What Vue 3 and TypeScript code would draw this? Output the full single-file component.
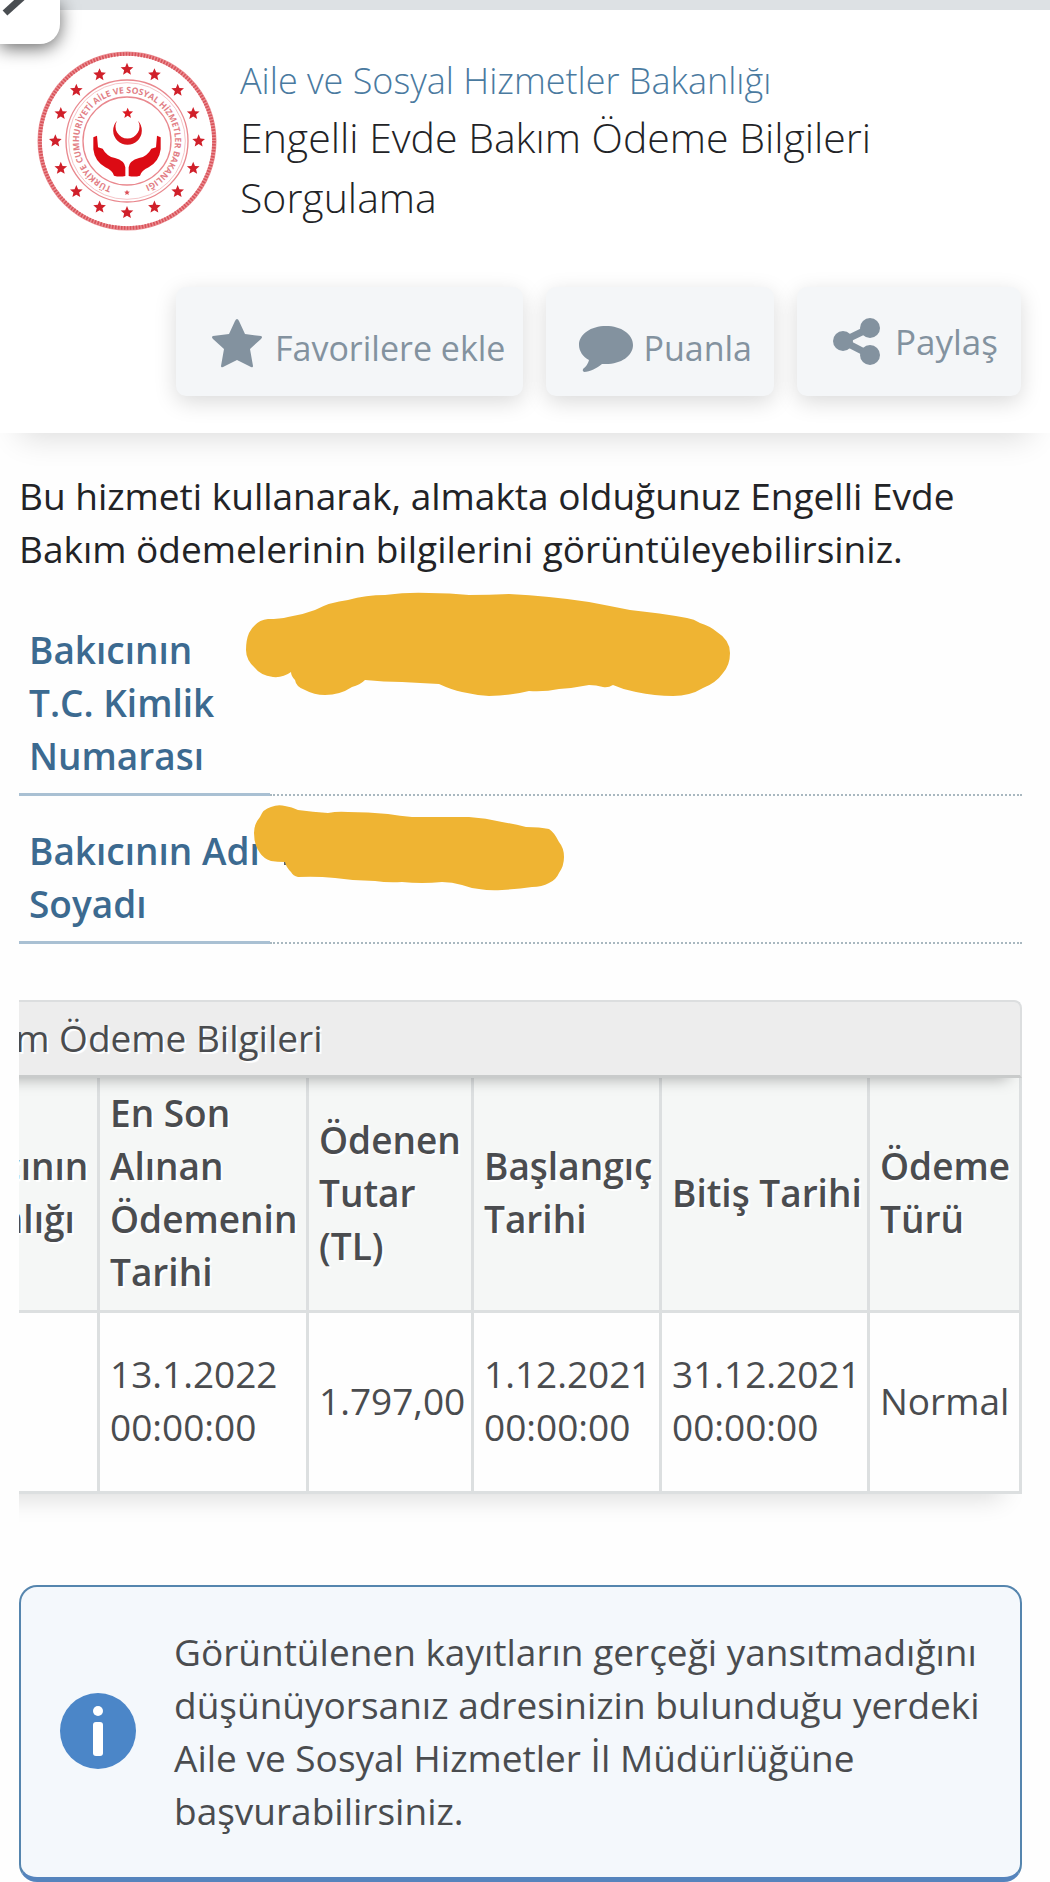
<script setup lang="ts">
interface Field {
  label: string
  redaction: string
  viewBox: string
  kind: string
}

interface Payment {
  relation: string
  lastPayment: string[]
  amount: string
  start: string[]
  end: string[]
  type: string
}

const fields: Field[] = [
  {
    label: 'Bakıcının T.C.\u00a0Kimlik Numarası',
    kind: 'id',
    viewBox: '240 585 500 120',
    redaction:
      'M246 650Q246 640 249 633Q256 620 268 619Q280 619 288 617Q302 615 315 610Q330 602 348 600Q366 595 385 595Q408 592 429 593Q450 593 469 595Q490 595 509 594Q530 595 549 597Q570 599 589 602Q610 606 630 610Q660 613 687 618Q694 619 700 623Q710 626 717 632Q730 640 730 653Q730 665 723 673Q716 683 703 688Q690 696 673 696Q655 696 636 692Q624 690 613 685Q608 688 603 687Q596 685 589 685Q574 688 559 689Q545 692 529 691Q509 696 489 696Q475 695 462 692Q452 690 439 684Q420 683 402 682Q384 682 365 680Q360 685 352 687Q340 695 325 695Q314 695 305 690Q296 687 295 680Q291 676 291 672Q283 678 273 677Q260 675 255 668Q246 660 246 650Z',
  },
  {
    label: 'Bakıcının Adı Soyadı',
    kind: 'name',
    viewBox: '250 800 320 95',
    redaction:
      'M254 833Q254 824 260 817Q263 809 271 807Q278 804 285 806Q292 807 298 810Q313 812 328 813Q338 811 348 812Q368 812 388 814Q400 816 412 817Q440 817 469 817Q486 818 502 822Q514 824 526 827Q540 827 549 829Q554 832 559 842Q564 848 564 857Q564 866 559 873Q556 880 549 883Q542 887 532 887Q518 889 502 890Q490 891 479 889Q470 888 462 885Q452 882 442 882Q422 884 402 882Q388 883 375 881Q355 881 335 878Q316 876 298 877Q293 876 291 872Q286 867 285 862Q277 862 271 861Q263 858 260 853Q254 845 254 833Z',
  },
]

const payments: Payment[] = [
  {
    relation: '',
    lastPayment: ['13.1.2022', '00:00:00'],
    amount: '1.797,00',
    start: ['1.12.2021', '00:00:00'],
    end: ['31.12.2021', '00:00:00'],
    type: 'Normal',
  },
]

function star(cx: number, cy: number, r: number): string {
  return Array.from({ length: 10 }, (_, i) => {
    const radius = i % 2 ? r * 0.45 : r
    const a = (i * Math.PI) / 5 - Math.PI / 2
    return `${(cx + radius * Math.cos(a)).toFixed(1)},${(cy + radius * Math.sin(a)).toFixed(1)}`
  }).join(' ')
}

const ringStars = Array.from({ length: 16 }, (_, i) => {
  const a = (i * Math.PI) / 8
  return star(381 + 215 * Math.sin(a), 423 - 215 * Math.cos(a), 20)
})
</script>

<template>
  <div class="page">
    <button class="corner" type="button" aria-label="Menü">
      <svg viewBox="0 0 60 44" width="60" height="44" aria-hidden="true">
        <path d="M5 13L26-6" stroke="#4a4e52" stroke-width="7" />
      </svg>
    </button>

    <header class="service">
      <div class="heading">
        <svg class="logo" viewBox="108 150 546 546" role="img" aria-label="Bakanlık amblemi">
          <circle cx="381" cy="423" r="262" fill="none" stroke="#eb8f94" stroke-width="13" />
          <circle cx="381" cy="423" r="261" fill="none" stroke="#d9545b" stroke-width="11" stroke-dasharray="5 4" />
          <polygon v-for="(points, i) in ringStars" :key="i" :points="points" fill="#d0202a" />
          <circle cx="381" cy="423" r="183" fill="none" stroke="#e9888e" stroke-width="4" />
          <circle cx="381" cy="423" r="175" fill="none" stroke="#f5c5c8" stroke-width="3" />
          <circle cx="381" cy="423" r="132" fill="none" stroke="#e9888e" stroke-width="4" />
          <path id="ring" d="M335 560A144 144 0 1 1 427 560" fill="none" />
          <text font-size="26" font-weight="700" fill="#e27f86">
            <textPath href="#ring">TÜRKİYE CUMHURİYETİ AİLE VE SOSYAL HİZMETLER BAKANLIĞI</textPath>
          </text>
          <polygon :points="star(381, 578, 9)" fill="#dc5058" />
          <polygon :points="star(383, 340, 17)" fill="#dc1a22" />
          <path d="M351 362A43 43 0 1 0 414 362A36 36 0 1 1 351 362Z" fill="#d9131b" />
          <path
            d="M280 412L291 407L294 442L308 446Q320 469 345 474Q374 482 376 502V528Q358 532 342 527Q338 512 316 502Q284 484 280 448Z"
            fill="#dc0b14"
          />
          <path
            d="M482 412L471 407L468 442L454 446Q442 469 417 474Q388 482 386 502V528Q404 532 420 527Q424 512 446 502Q478 484 482 448Z"
            fill="#dc0b14"
          />
        </svg>
        <div class="titles">
          <a class="ministry" href="#">Aile ve Sosyal Hizmetler Bakanlığı</a>
          <h1>Engelli Evde Bakım Ödeme Bilgileri Sorgulama</h1>
        </div>
      </div>

      <div class="actions">
        <button class="action favorite" type="button">
          <svg viewBox="0 0 50 60" width="50" height="60" aria-hidden="true">
            <path
              d="M25 0Q26 0 27 2L33 15L49 17Q51 18 49 20L38 30L41 47Q41 49 39 48L25 41L11 48Q9 49 9 47L12 30L1 20Q-1 18 1 17L17 15L23 2Q24 0 25 0Z"
            />
          </svg>
          <span>Favorilere ekle</span>
        </button>
        <button class="action rate" type="button">
          <svg viewBox="0 0 54 46" width="54" height="46" aria-hidden="true">
            <path
              d="M27 0C42 0 54 8 54 19S42 38 27 38H23C18 42 11 46 5 46Q3 45 4 43Q9 39 10 34C4 31 0 25 0 19C0 8 12 0 27 0Z"
            />
          </svg>
          <span>Puanla</span>
        </button>
        <button class="action share" type="button">
          <svg viewBox="0 0 47 47" width="47" height="47" aria-hidden="true">
            <path d="M37 10L10 23L37 37" fill="none" stroke="#83929f" stroke-width="7" />
            <circle cx="37" cy="10" r="10" />
            <circle cx="10" cy="23" r="10" />
            <circle cx="37" cy="37" r="10" />
          </svg>
          <span>Paylaş</span>
        </button>
      </div>
    </header>

    <main>
      <p class="intro">
        Bu hizmeti kullanarak, almakta olduğunuz Engelli Evde Bakım ödemelerinin bilgilerini görüntüleyebilirsiniz.
      </p>

      <dl class="fields">
        <div v-for="field in fields" :key="field.label" class="field" :class="field.kind">
          <dt>{{ field.label }}</dt>
          <dd>
            <svg class="redaction" :viewBox="field.viewBox" aria-hidden="true">
              <rect v-if="field.kind === 'name'" x="284" y="861" width="3" height="4" fill="#596169" />
              <path :d="field.redaction" fill="#efb433" />
            </svg>
          </dd>
        </div>
      </dl>

      <div class="scroller">
        <table>
          <caption>Bakım Ödeme Bilgileri</caption>
          <colgroup>
            <col class="c-relation" />
            <col class="c-last" />
            <col class="c-amount" />
            <col class="c-start" />
            <col class="c-end" />
            <col class="c-type" />
          </colgroup>
          <thead>
            <tr>
              <th scope="col">Bakıcının Yakınlığı</th>
              <th scope="col">En Son Alınan Ödemenin Tarihi</th>
              <th scope="col">Ödenen Tutar (TL)</th>
              <th scope="col">Başlangıç Tarihi</th>
              <th scope="col" class="single">Bitiş Tarihi</th>
              <th scope="col">Ödeme Türü</th>
            </tr>
          </thead>
          <tbody>
            <tr v-for="(p, i) in payments" :key="i">
              <td>{{ p.relation }}</td>
              <td><div v-for="part in p.lastPayment" :key="part">{{ part }}</div></td>
              <td>{{ p.amount }}</td>
              <td><div v-for="part in p.start" :key="part">{{ part }}</div></td>
              <td><div v-for="part in p.end" :key="part">{{ part }}</div></td>
              <td>{{ p.type }}</td>
            </tr>
          </tbody>
        </table>
      </div>

      <aside class="notice">
        <svg viewBox="0 0 76 76" width="76" height="76" aria-hidden="true">
          <circle cx="38" cy="38" r="38" fill="#4b86c8" />
          <circle cx="38" cy="18" r="5" fill="#fff" />
          <rect x="33" y="29" width="10" height="34" rx="3" fill="#fff" />
        </svg>
        <p>
          Görüntülenen kayıtların gerçeği yansıtmadığını düşünüyorsanız adresinizin bulunduğu yerdeki Aile ve Sosyal
          Hizmetler İl Müdürlüğüne başvurabilirsiniz.
        </p>
      </aside>
    </main>
  </div>
</template>

<style>
body {
  margin: 0;
  background: #fefefe;
}
</style>

<style scoped>
.page {
  position: relative;
  overflow: hidden;
  font-family: 'Open Sans', 'Noto Sans', sans-serif;
  font-size: 37px;
  line-height: 53px;
  color: #4a4c4f;
}

.page * {
  box-sizing: border-box;
}

.corner {
  position: absolute;
  z-index: 2;
  top: 0;
  left: 0;
  width: 60px;
  height: 44px;
  padding: 0;
  border: 0;
  border-radius: 0 0 20px 0;
  background: #fff;
  box-shadow: 0 4px 18px rgba(0, 0, 0, 0.6);
}

.corner svg {
  display: block;
}

.service {
  padding: 40px 29px 37px 36px;
  border-top: 10px solid #dde1e4;
  background: #fff;
  box-shadow: 0 24px 30px -20px rgba(0, 0, 0, 0.14);
}

.heading {
  display: flex;
  gap: 22px;
}

.logo {
  flex: none;
  width: 182px;
  height: 182px;
}

.titles {
  padding-top: 4px;
}

.ministry {
  display: block;
  color: #4a7a9f;
  font-size: 36px;
  font-weight: 300;
  text-decoration: none;
}

h1 {
  margin: 0;
  color: #222326;
  font-size: 41px;
  font-weight: 300;
  line-height: 60px;
}

.actions {
  display: flex;
  justify-content: flex-end;
  gap: 23px;
  margin-top: 55px;
}

.action {
  display: flex;
  align-items: center;
  height: 109px;
  padding: 14px 18px 0 36px;
  gap: 13px;
  border: 0;
  border-radius: 10px;
  background: #f4f6f8;
  box-shadow: 0 6px 22px rgba(0, 0, 0, 0.15);
  color: #83929f;
  font: inherit;
  font-size: 34px;
}

.action svg {
  flex: none;
  fill: currentColor;
}

.rate {
  gap: 10px;
  padding-right: 22px;
  padding-left: 33px;
}

.share {
  gap: 15px;
  padding-top: 0;
  padding-right: 23px;
  font-size: 35px;
}

main {
  padding: 36px 28px 0 19px;
}

.intro {
  margin: 0;
  color: #222326;
}

.fields {
  margin: 20px 0 0;
}

.field {
  position: relative;
  display: flex;
}

dt {
  flex: none;
  width: 251px;
  padding: 28px 0 11px 10px;
  border-bottom: 3px solid #a9c0d3;
  color: #3c6a90;
  font-weight: 600;
}

dd {
  flex: 1;
  margin: 0;
  border-bottom: 2px dotted #a9b8c0;
}

.redaction {
  position: absolute;
}

.id .redaction {
  top: -10px;
  left: 221px;
  width: 500px;
  height: 120px;
}

.name .redaction {
  top: 4px;
  left: 231px;
  width: 320px;
  height: 95px;
}

.scroller {
  display: flex;
  justify-content: flex-end;
  margin-top: 56px;
  padding-bottom: 40px;
  overflow: hidden;
}

table {
  flex: none;
  width: 1107px;
  table-layout: fixed;
  border-collapse: collapse;
  box-shadow: 0 24px 24px -20px rgba(0, 0, 0, 0.14);
}

caption {
  position: relative;
  z-index: 1;
  padding: 9px 12px 11px 28px;
  border: 2px solid #dcdedf;
  border-bottom: 3px solid #c9cbcb;
  border-radius: 8px 8px 0 0;
  background: #ededed;
  box-shadow: 0 14px 16px -14px rgba(0, 0, 0, 0.35);
  text-align: left;
  text-shadow: 2px 2px 1px #fff;
}

.c-relation {
  width: 185px;
}

.c-last {
  width: 209px;
}

.c-amount {
  width: 165px;
}

.c-start {
  width: 188px;
}

.c-end {
  width: 208px;
}

.c-type {
  width: 152px;
}

th,
td {
  padding: 0 6px 3px 10px;
  border: 3px solid #dcdfe0;
  border-top: 0;
  text-align: left;
  vertical-align: middle;
}

th {
  height: 233px;
  background: #f5f7f6;
  font-weight: 600;
  text-shadow: 2px 2px 1px #fff;
}

td {
  height: 181px;
  background: #fefefe;
}

.single {
  white-space: nowrap;
}

.notice {
  display: flex;
  align-items: center;
  gap: 38px;
  min-height: 297px;
  margin-top: 51px;
  padding: 36px 38px 38px 39px;
  border: 2px solid #5585ae;
  border-bottom: 5px solid #5584bd;
  border-radius: 18px;
  background: #f4f8fc;
}

.notice svg {
  flex: none;
}

.notice p {
  margin: 0;
}
</style>
